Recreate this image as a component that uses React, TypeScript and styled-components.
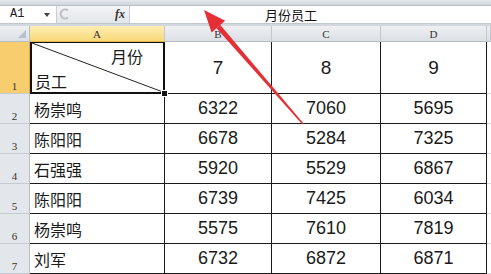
import { Fragment } from "react";
import styled, { createGlobalStyle } from "styled-components";

const GlobalStyle = createGlobalStyle`
  html, body {
    margin: 0;
    padding: 0;
    background: #fff;
    overflow: hidden;
  }
  body {
    font-family: "Liberation Sans", "Noto Sans CJK SC", sans-serif;
  }
`;

const Page = styled.div`
  position: relative;
  width: 491px;
  height: 274px;
  overflow: hidden;
  background: #d6dae0;
  display: flex;
  flex-direction: column;
`;

const TopStrip = styled.div`
  height: 7px;
  background: linear-gradient(#e6e9ed, #cfd4da);
  border-bottom: 1px solid #b9bfc7;
  box-sizing: border-box;
`;

const FormulaBar = styled.div`
  height: 18px;
  display: flex;
  align-items: stretch;
  background: #fff;
  border-bottom: 1px solid #c2c7ce;
  box-sizing: border-box;
`;

const NameBox = styled.div`
  width: 56px;
  display: flex;
  align-items: center;
  padding-left: 10px;
  box-sizing: border-box;
  font-family: "Liberation Mono", "DejaVu Sans Mono", monospace;
  font-size: 12px;
  color: #222;
  position: relative;
`;

const Drop = styled.span`
  position: absolute;
  right: 6px;
  top: 7px;
  width: 0;
  height: 0;
  border-left: 3px solid transparent;
  border-right: 3px solid transparent;
  border-top: 4px solid #444;
`;

const FxArea = styled.div`
  width: 74px;
  display: flex;
  align-items: center;
  justify-content: space-between;
  padding: 0 4px 0 2px;
  box-sizing: border-box;
  background: linear-gradient(#f3f4f6, #e3e6ea);
  border-left: 1px solid #c9cdd3;
  border-right: 1px solid #c9cdd3;
`;

const Fx = styled.span`
  font-family: "Liberation Serif", serif;
  font-style: italic;
  font-weight: bold;
  font-size: 12px;
  color: #333;
`;

const FormulaInput = styled.div`
  flex: 1;
  display: flex;
  align-items: center;
  padding-left: 135px;
  font-family: "Noto Sans CJK SC", sans-serif;
  font-size: 13px;
  color: #111;
`;

const Gap = styled.div`
  height: 3px;
  background: #d3d8de;
`;

const Sheet = styled.div`
  display: grid;
  grid-template-columns: 30px 135px 107px 109px 106px 4px;
  grid-template-rows: 16px 52px repeat(6, 30px);
  background: #fff;
`;

const Corner = styled.div`
  background: linear-gradient(#eef0f3, #dcdfe4);
  border-right: 1px solid #b9bec6;
  border-bottom: 1px solid #b9bec6;
  box-sizing: border-box;
  position: relative;
  &::after {
    content: "";
    position: absolute;
    right: 3px;
    bottom: 3px;
    border-left: 8px solid transparent;
    border-bottom: 8px solid #b7c0cc;
  }
`;

const ColHead = styled.div<{ $active?: boolean }>`
  display: flex;
  align-items: center;
  justify-content: center;
  box-sizing: border-box;
  font-family: "Liberation Serif", serif;
  font-size: 11px;
  color: #333;
  background: ${(p) =>
    p.$active
      ? "linear-gradient(#fdeeb4, #f8d978)"
      : "linear-gradient(#eef0f3, #dcdfe4)"};
  border-right: 1px solid #c3c8cf;
  border-bottom: 1px solid ${(p) => (p.$active ? "#e7b548" : "#b9bec6")};
`;

const RowHead = styled.div<{ $active?: boolean }>`
  display: flex;
  align-items: flex-end;
  justify-content: center;
  padding-bottom: 1px;
  box-sizing: border-box;
  font-family: "Liberation Serif", serif;
  font-size: 11px;
  color: #333;
  background: ${(p) => (p.$active ? "#f7cd6e" : "#e3e7ec")};
  border-right: 1px solid ${(p) => (p.$active ? "#e2ac3e" : "#b9bec6")};
  border-bottom: 1px solid #c6cbd2;
`;

const Cell = styled.div<{ $name?: boolean; $big?: boolean }>`
  display: flex;
  align-items: center;
  justify-content: ${(p) => (p.$name ? "flex-start" : "center")};
  padding-left: ${(p) => (p.$name ? "4px" : "0")};
  box-sizing: border-box;
  border-right: 1px solid #1a1a1a;
  border-bottom: 1px solid #1a1a1a;
  font-family: ${(p) =>
    p.$name ? '"Noto Sans CJK SC", sans-serif' : '"Liberation Sans", sans-serif'};
  font-size: ${(p) => (p.$name ? "16px" : p.$big ? "19px" : "18px")};
  color: #1a1a1a;
`;

const Filler = styled.div`
  border-bottom: 1px solid #d9dde3;
`;

const SplitCell = styled.div`
  position: relative;
  box-sizing: border-box;
  border: 2px solid #111;
  border-top-width: 1px;
  font-family: "Noto Sans CJK SC", sans-serif;
  font-size: 16px;
  color: #1a1a1a;
  display: flex;
  flex-direction: column;
  justify-content: space-between;
  padding: 3px 20px 1px 3px;
`;

const Diagonal = styled.svg`
  position: absolute;
  inset: 0;
  width: 100%;
  height: 100%;
`;

const TopLabel = styled.span`
  align-self: flex-end;
  line-height: 20px;
`;

const BottomLabel = styled.span`
  line-height: 20px;
`;

const Handle = styled.span`
  position: absolute;
  right: -5px;
  bottom: -5px;
  width: 5px;
  height: 5px;
  background: #111;
  border: 1px solid #fff;
`;

const Arrow = styled.svg`
  position: absolute;
  left: 0;
  top: 0;
  pointer-events: none;
`;

const rows: [number, string, number, number, number][] = [
  [2, "杨崇鸣", 6322, 7060, 5695],
  [3, "陈阳阳", 6678, 5284, 7325],
  [4, "石强强", 5920, 5529, 6867],
  [5, "陈阳阳", 6739, 7425, 6034],
  [6, "杨崇鸣", 5575, 7610, 7819],
  [7, "刘军", 6732, 6872, 6871],
];

export default function App() {
  return (
    <Page>
      <GlobalStyle />
      <TopStrip />
      <FormulaBar>
        <NameBox>
          A1
          <Drop />
        </NameBox>
        <FxArea>
          <svg width="12" height="12" viewBox="0 0 12 12">
            <path d="M9 2.5 A4.5 4.5 0 1 0 9 9.5" fill="none" stroke="#b9bec5" strokeWidth="2" />
          </svg>
          <Fx>fx</Fx>
        </FxArea>
        <FormulaInput>月份员工</FormulaInput>
      </FormulaBar>
      <Gap />
      <Sheet>
        <Corner />
        <ColHead $active>A</ColHead>
        <ColHead>B</ColHead>
        <ColHead>C</ColHead>
        <ColHead>D</ColHead>
        <ColHead />

        <RowHead $active>1</RowHead>
        <SplitCell>
          <Diagonal viewBox="0 0 100 100" preserveAspectRatio="none">
            <line x1="0" y1="0" x2="100" y2="100" stroke="#222" strokeWidth="1" vectorEffect="non-scaling-stroke" />
          </Diagonal>
          <TopLabel>月份</TopLabel>
          <BottomLabel>员工</BottomLabel>
          <Handle />
        </SplitCell>
        <Cell $big>7</Cell>
        <Cell $big>8</Cell>
        <Cell $big>9</Cell>
        <Filler />

        {rows.map(([n, name, b, c, d]) => (
          <Fragment key={n}>
            <RowHead>{n}</RowHead>
            <Cell $name>{name}</Cell>
            <Cell>{b}</Cell>
            <Cell>{c}</Cell>
            <Cell>{d}</Cell>
            <Filler />
          </Fragment>
        ))}
      </Sheet>
      <Arrow width="491" height="274" viewBox="0 0 491 274">
        <polygon
          points="303.6,123.5 302.4,124.5 216.5,28.2 220.3,25.0"
          fill="#e52f35"
        />
        <polygon points="204,10 225.2,20.7 211.6,32.5" fill="#e52f35" />
      </Arrow>
    </Page>
  );
}
